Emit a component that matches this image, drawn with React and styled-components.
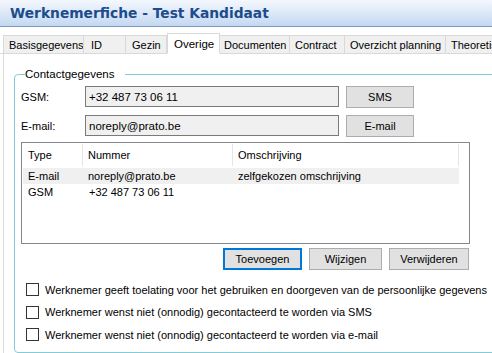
import React from "react";
import styled, { createGlobalStyle } from "styled-components";

const Global = createGlobalStyle`
  html, body { margin: 0; padding: 0; background: #fff; }
  body { font-family: "Liberation Sans", Arial, sans-serif; font-size: 11px; color: #000; }
`;

const Page = styled.div`
  width: 492px;
  height: 353px;
  overflow: hidden;
  background: #fff;
  display: flex;
  flex-direction: column;
`;

const TitleBar = styled.div`
  height: 27px;
  flex: none;
  box-sizing: border-box;
  border-bottom: 1px solid #7f99bd;
  background: linear-gradient(#f4f8fd, #c4d8f2);
  display: flex;
  align-items: center;
  padding-left: 10px;
  font-family: "DejaVu Sans", sans-serif;
  font-weight: bold;
  font-size: 13.8px;
  color: #1c4c8c;
  white-space: nowrap;
`;

const TabStrip = styled.div`
  margin-top: 6px;
  height: 21px;
  flex: none;
  display: flex;
  align-items: flex-end;
  padding-left: 3px;
  border-bottom: 1px solid #d9d9d9;
  box-sizing: border-box;
  white-space: nowrap;
`;

const Tab = styled.div`
  box-sizing: border-box;
  height: ${(p) => (p.$active ? 21 : 18)}px;
  width: ${(p) => p.$w}px;
  flex: none;
  border: 1px solid #d9d9d9;
  border-left: ${(p) => (p.$first || p.$active ? "1px solid #d9d9d9" : "none")};
  border-bottom: ${(p) => (p.$active ? "1px solid #fff" : "none")};
  margin-bottom: ${(p) => (p.$active ? -1 : 0)}px;
  background: ${(p) => (p.$active ? "#fff" : "#f0f0f0")};
  padding-left: ${(p) => p.$pl}px;
  display: flex;
  align-items: center;
  font-size: ${(p) => (p.$active ? 11.5 : 11)}px;
  overflow: hidden;
`;

const Panel = styled.div`
  flex: 1;
  border-left: 1px solid #d9d9d9;
  margin-left: 3px;
  padding: 14px 0 0 10px;
  display: flex;
  flex-direction: column;
`;

const Group = styled.fieldset`
  margin: 0;
  width: 520px;
  box-sizing: border-box;
  border: 1px solid #84cbd8;
  border-radius: 4px;
  padding: 2px 0 8px 6px;
  flex: 1;
  display: flex;
  flex-direction: column;
`;

const Legend = styled.legend`
  padding: 0 10px 0 0;
  margin-left: 4px;
  font-size: 11.5px;
`;

const FieldRow = styled.div`
  display: flex;
  align-items: center;
  height: 29px;
`;

const Label = styled.div`
  width: 64px;
  flex: none;
`;

const Input = styled.div`
  width: 254px;
  height: 21px;
  box-sizing: border-box;
  border: 1px solid #7a7a7a;
  background: #f0f0f0;
  padding-left: 3px;
  display: flex;
  align-items: center;
  flex: none;
  font-size: 11.5px;
`;

const Button = styled.div`
  box-sizing: border-box;
  width: ${(p) => p.$w}px;
  height: 22px;
  flex: none;
  border: ${(p) => (p.$focus ? "2px solid #0078d7" : "1px solid #adadad")};
  background: #e1e1e1;
  display: flex;
  align-items: center;
  justify-content: center;
`;

const RowButton = styled(Button)`
  margin-left: 7px;
`;

const Table = styled.div`
  margin-top: 2px;
  width: 449px;
  height: 102px;
  box-sizing: border-box;
  border: 1px solid #828790;
  padding: 1px 10px 0 1px;
`;

const HeadRow = styled.div`
  display: grid;
  grid-template-columns: 60px 150px 1fr;
  height: 22px;
  margin-bottom: 2px;
`;

const HeadCell = styled.div`
  display: flex;
  align-items: center;
  padding-left: 5px;
  border-right: 1px solid #e5e5e5;
`;

const DataRow = styled.div`
  display: grid;
  grid-template-columns: 60px 150px 1fr;
  height: 16px;
  align-items: center;
  background: ${(p) => (p.$sel ? "#f0f0f0" : "transparent")};
`;

const Cell = styled.div`
  padding-left: ${(p) => p.$pl ?? 5}px;
`;

const ButtonBar = styled.div`
  display: flex;
  gap: 7px;
  padding-left: 202px;
  margin-top: 4px;
`;

const Checks = styled.div`
  margin-top: 13px;
  display: flex;
  flex-direction: column;
  gap: 9px;
  padding-left: 5px;
`;

const CheckRow = styled.div`
  display: flex;
  align-items: center;
  gap: 6px;
  height: 13.5px;
  white-space: nowrap;
`;

const Box = styled.div`
  width: 13px;
  height: 13px;
  box-sizing: border-box;
  border: 1px solid #333;
  background: #fff;
  flex: none;
`;

const tabs = [
  ["Basisgegevens", 81, 5],
  ["ID", 42, 7],
  ["Gezin", 41, 6],
  ["Overige", 53, 6],
  ["Documenten", 70, 4],
  ["Contract", 55, 5],
  ["Overzicht planning", 101, 5],
  ["Theoretische", 80, 5],
];

export default function App() {
  return (
    <>
      <Global />
      <Page>
        <TitleBar>Werknemerfiche - Test Kandidaat</TitleBar>
        <TabStrip>
          {tabs.map(([t, w, pl], i) => (
            <Tab key={t} $w={w} $pl={pl} $first={i === 0} $active={t === "Overige"}>
              {t}
            </Tab>
          ))}
        </TabStrip>
        <Panel>
          <Group>
            <Legend>Contactgegevens</Legend>
            <FieldRow>
              <Label>GSM:</Label>
              <Input>+32 487 73 06 11</Input>
              <RowButton $w={68}>SMS</RowButton>
            </FieldRow>
            <FieldRow>
              <Label>E-mail:</Label>
              <Input>noreply@prato.be</Input>
              <RowButton $w={68}>E-mail</RowButton>
            </FieldRow>
            <Table>
              <HeadRow>
                <HeadCell>Type</HeadCell>
                <HeadCell>Nummer</HeadCell>
                <HeadCell>Omschrijving</HeadCell>
              </HeadRow>
              <DataRow $sel>
                <Cell>E-mail</Cell>
                <Cell>noreply@prato.be</Cell>
                <Cell>zelfgekozen omschrijving</Cell>
              </DataRow>
              <DataRow>
                <Cell>GSM</Cell>
                <Cell $pl={6}>+32 487 73 06 11</Cell>
                <Cell />
              </DataRow>
            </Table>
            <ButtonBar>
              <Button $w={79} $focus>Toevoegen</Button>
              <Button $w={73}>Wijzigen</Button>
              <Button $w={80}>Verwijderen</Button>
            </ButtonBar>
            <Checks>
              <CheckRow><Box />Werknemer geeft toelating voor het gebruiken en doorgeven van de persoonlijke gegevens</CheckRow>
              <CheckRow><Box />Werknemer wenst niet (onnodig) gecontacteerd te worden via SMS</CheckRow>
              <CheckRow><Box />Werknemer wenst niet (onnodig) gecontacteerd te worden via e-mail</CheckRow>
            </Checks>
          </Group>
        </Panel>
      </Page>
    </>
  );
}
